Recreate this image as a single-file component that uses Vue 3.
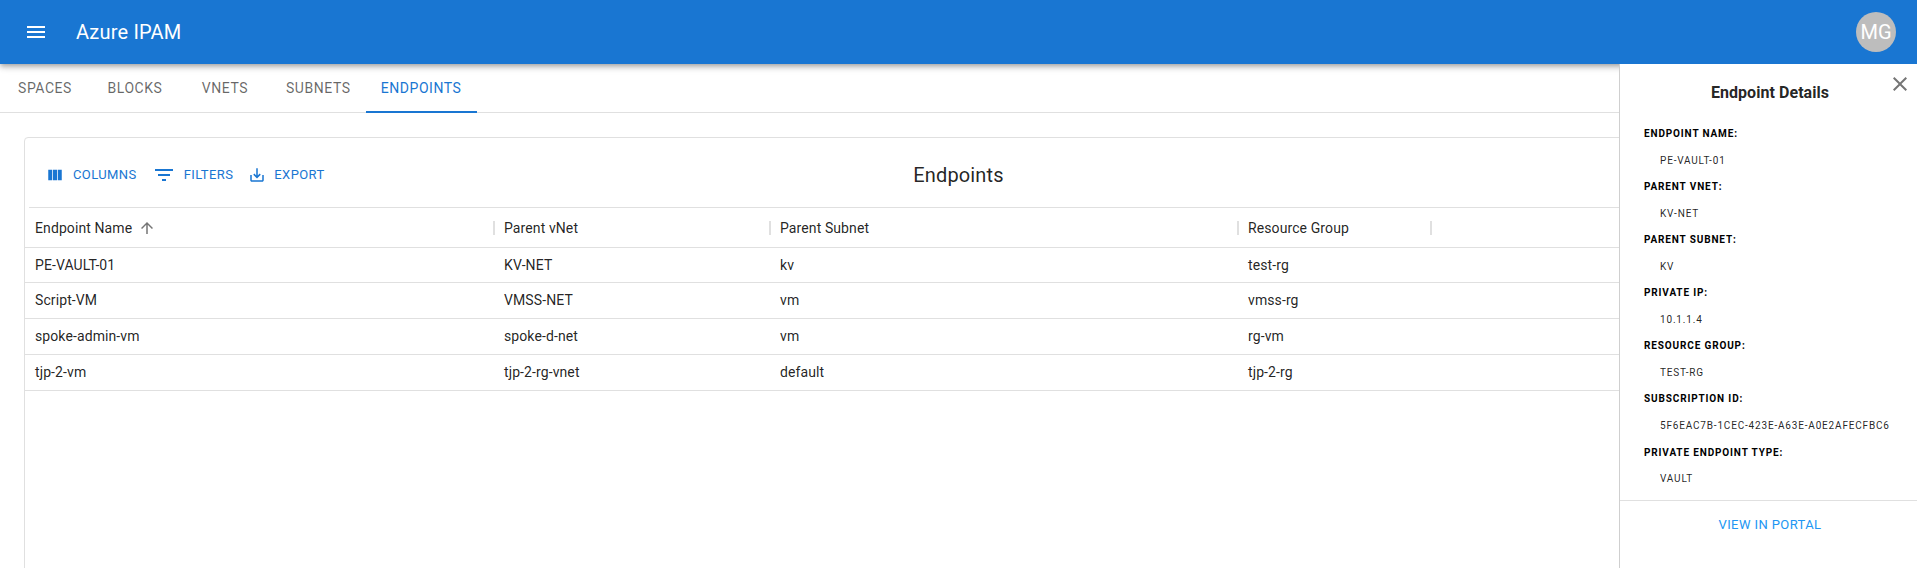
<template>
  <div class="page">
    <header class="appbar">
      <button class="icon-btn menu">
        <svg viewBox="0 0 24 24" width="24" height="24"><path d="M3 18h18v-2H3v2zm0-5h18v-2H3v2zm0-7v2h18V6H3z" /></svg>
      </button>
      <div class="app-title">Azure IPAM</div>
      <div class="avatar">MG</div>
    </header>

    <nav class="tabs">
      <div v-for="t in tabs" :key="t" class="tab" :class="{ active: t === 'Endpoints' }">{{ t }}</div>
    </nav>

    <main class="content">
      <section class="card">
        <div class="toolbar">
          <div class="actions">
            <button class="action act-columns">
              <svg viewBox="0 0 24 24" width="18" height="18"><path d="M14.67 5v14H9.33V5h5.34zm1 14H21V5h-5.33v14zm-7.34 0V5H3v14h5.33z" /></svg>
              Columns
            </button>
            <button class="action act-filters">
              <svg viewBox="0 0 24 24" width="24" height="24"><path d="M10 18h4v-2h-4v2zM3 6v2h18V6H3zm3 7h12v-2H6v2z" /></svg>
              Filters
            </button>
            <button class="action act-export">
              <svg viewBox="0 0 24 24" width="18" height="18"><path d="M19 12v7H5v-7H3v7c0 1.1.9 2 2 2h14c1.1 0 2-.9 2-2v-7h-2zm-6 .67l2.59-2.58L17 11.5l-5 5-5-5 1.41-1.41L11 12.67V3h2v9.67z" /></svg>
              Export
            </button>
          </div>
          <h2 class="card-title">Endpoints</h2>
          <div></div>
        </div>

        <div class="table">
          <div class="head-wrap">
            <div class="row head">
              <div v-for="(c, i) in columns" :key="c" class="cell">
                <span>{{ c }}</span>
                <svg v-if="i === 0" class="sort" viewBox="0 0 24 24" width="18" height="18"><path d="M4 12l1.41 1.41L11 7.83V20h2V7.83l5.58 5.59L20 12l-8-8-8 8z" /></svg>
              </div>
              <div class="cell"></div>
            </div>
          </div>
          <div v-for="r in rows" :key="r[0]" class="row body">
            <div v-for="(v, i) in r" :key="i" class="cell">{{ v }}</div>
            <div class="cell"></div>
          </div>
        </div>
      </section>
    </main>

    <aside class="drawer">
      <button class="icon-btn close">
        <svg viewBox="0 0 24 24" width="24" height="24"><path d="M19 6.41L17.59 5 12 10.59 6.41 5 5 6.41 10.59 12 5 17.59 6.41 19 12 13.41 17.59 19 19 17.59 13.41 12 19 6.41z" /></svg>
      </button>
      <h3 class="drawer-title">Endpoint Details</h3>
      <dl class="details">
        <template v-for="d in details" :key="d.label">
          <dt>{{ d.label }}:</dt>
          <dd>{{ d.value }}</dd>
        </template>
      </dl>
      <div class="drawer-foot">
        <button class="portal">View in Portal</button>
      </div>
    </aside>
  </div>
</template>

<script setup>
const tabs = ['Spaces', 'Blocks', 'vNets', 'Subnets', 'Endpoints']
const columns = ['Endpoint Name', 'Parent vNet', 'Parent Subnet', 'Resource Group']
const rows = [
  ['PE-VAULT-01', 'KV-NET', 'kv', 'test-rg'],
  ['Script-VM', 'VMSS-NET', 'vm', 'vmss-rg'],
  ['spoke-admin-vm', 'spoke-d-net', 'vm', 'rg-vm'],
  ['tjp-2-vm', 'tjp-2-rg-vnet', 'default', 'tjp-2-rg']
]
const details = [
  { label: 'Endpoint Name', value: 'PE-VAULT-01' },
  { label: 'Parent vNet', value: 'KV-NET' },
  { label: 'Parent Subnet', value: 'kv' },
  { label: 'Private IP', value: '10.1.1.4' },
  { label: 'Resource Group', value: 'test-rg' },
  { label: 'Subscription ID', value: '5f6eac7b-1cec-423e-a63e-a0e2afecfbc6' },
  { label: 'Private Endpoint Type', value: 'vault' }
]
</script>

<style>
html, body {
  margin: 0;
  height: 100%;
  overflow: hidden;
  background: #fff;
}
</style>

<style scoped>
.page {
  position: relative;
  height: 568px;
  overflow: hidden;
  font-family: Roboto, "Liberation Sans", sans-serif;
  color: rgba(0, 0, 0, 0.87);
  display: flex;
  flex-direction: column;
}

button {
  background: none;
  border: none;
  padding: 0;
  font-family: inherit;
  cursor: pointer;
}

.appbar {
  position: relative;
  z-index: 2;
  flex: none;
  height: 64px;
  background: #1976d2;
  color: #fff;
  display: flex;
  align-items: center;
  padding: 0 21px 0 24px;
  box-shadow: 0 2px 4px -1px rgba(0, 0, 0, 0.2), 0 4px 5px 0 rgba(0, 0, 0, 0.14), 0 1px 10px 0 rgba(0, 0, 0, 0.12);
}

.icon-btn {
  display: flex;
}

.menu svg {
  fill: #fff;
}

.app-title {
  margin-left: 28px;
  font-size: 20px;
  font-weight: 400;
  letter-spacing: 0.2px;
  flex: 1;
}

.avatar {
  width: 40px;
  height: 40px;
  border-radius: 50%;
  background: #bdbdbd;
  color: #fff;
  font-size: 20px;
  display: flex;
  align-items: center;
  justify-content: center;
}

.tabs {
  flex: none;
  height: 48px;
  display: flex;
  border-bottom: 1px solid #e0e0e0;
}

.tab {
  min-width: 90px;
  box-sizing: border-box;
  padding: 0 16px;
  display: flex;
  align-items: center;
  justify-content: center;
  font-size: 14px;
  font-weight: 400;
  letter-spacing: 0.55px;
  text-transform: uppercase;
  color: rgba(0, 0, 0, 0.6);
}

.tab.active {
  color: #1976d2;
  height: 49px;
  width: 111px;
  margin-left: -1px;
  border-bottom: 2px solid #1976d2;
  box-sizing: border-box;
}

.content {
  flex: 1;
  padding: 24px;
}

.card {
  height: 500px;
  border: 1px solid #e0e0e0;
  border-radius: 4px;
}

.toolbar {
  display: grid;
  grid-template-columns: 1fr auto 1fr;
  align-items: center;
  height: 69px;
  padding: 4px 21px 0 21px;
  box-sizing: border-box;
}

.actions {
  display: flex;
  align-items: center;
}

.action {
  display: flex;
  align-items: center;
  color: #1976d2;
  font-size: 13px;
  font-weight: 400;
  letter-spacing: 0.4px;
  text-transform: uppercase;
}

.action svg {
  fill: currentColor;
}

.act-columns svg {
  margin-right: 9px;
}

.act-filters {
  margin-left: 15px;
}

.act-filters svg {
  margin-right: 8px;
}

.act-export {
  margin-left: 15px;
}

.act-export svg {
  margin-right: 8px;
}

.card-title {
  margin: 0;
  font-size: 20px;
  font-weight: 400;
  letter-spacing: 0.15px;
}

.head-wrap {
  margin-left: 4px;
  border-top: 1px solid #e0e0e0;
}

.row {
  display: grid;
  grid-template-columns: 468px 276px 468px 193px 1fr;
  border-bottom: 1px solid #e0e0e0;
  font-size: 14px;
  letter-spacing: 0.1px;
}

.head-wrap .row {
  margin-left: -4px;
}

.row.head {
  height: 39px;
}

.row.body {
  height: 35px;
}

.row.body:nth-child(2) {
  height: 34px;
}

.cell {
  display: flex;
  align-items: center;
  padding-left: 11px;
}

.cell:first-child {
  padding-left: 10px;
}

.row.body .cell {
  color: rgba(0, 0, 0, 0.87);
  padding-bottom: 1px;
}

.head .cell {
  position: relative;
}

.head .cell + .cell::before {
  content: "";
  position: absolute;
  left: 0;
  top: 13px;
  width: 2px;
  height: 14px;
  background: #e0e0e0;
}

.sort {
  margin-left: 6px;
  fill: #757575;
}

.drawer {
  position: absolute;
  z-index: 3;
  top: 64px;
  right: 0;
  bottom: 0;
  width: 298px;
  box-sizing: border-box;
  border-left: 1px solid #cfcfcf;
  background: #fff;
  display: flex;
  flex-direction: column;
}

.close {
  position: absolute;
  top: 8px;
  right: 5px;
}

.close svg {
  fill: #757575;
}

.drawer-title {
  margin: 17px 0 0;
  text-align: center;
  font-size: 16px;
  line-height: 24px;
  font-weight: 700;
  letter-spacing: 0.05px;
  padding-left: 3px;
}

.details {
  margin: 16px 0 0;
  padding-left: 24px;
  height: 379px;
}

.details dt {
  height: 26.5px;
  line-height: 26.5px;
  font-size: 10px;
  font-weight: 700;
  letter-spacing: 0.86px;
  text-transform: uppercase;
  color: #000;
}

.details dd {
  margin: 0 0 0 16px;
  height: 26.6px;
  line-height: 26.6px;
  font-size: 10px;
  letter-spacing: 0.82px;
  text-transform: uppercase;
  color: rgba(0, 0, 0, 0.87);
}

.drawer-foot {
  border-top: 1px solid #e0e0e0;
  display: flex;
  justify-content: center;
  padding-top: 14px;
}

.portal {
  color: #2196f3;
  font-size: 13px;
  line-height: 20px;
  letter-spacing: 0.4px;
  text-transform: uppercase;
  padding-left: 3px;
}
</style>
